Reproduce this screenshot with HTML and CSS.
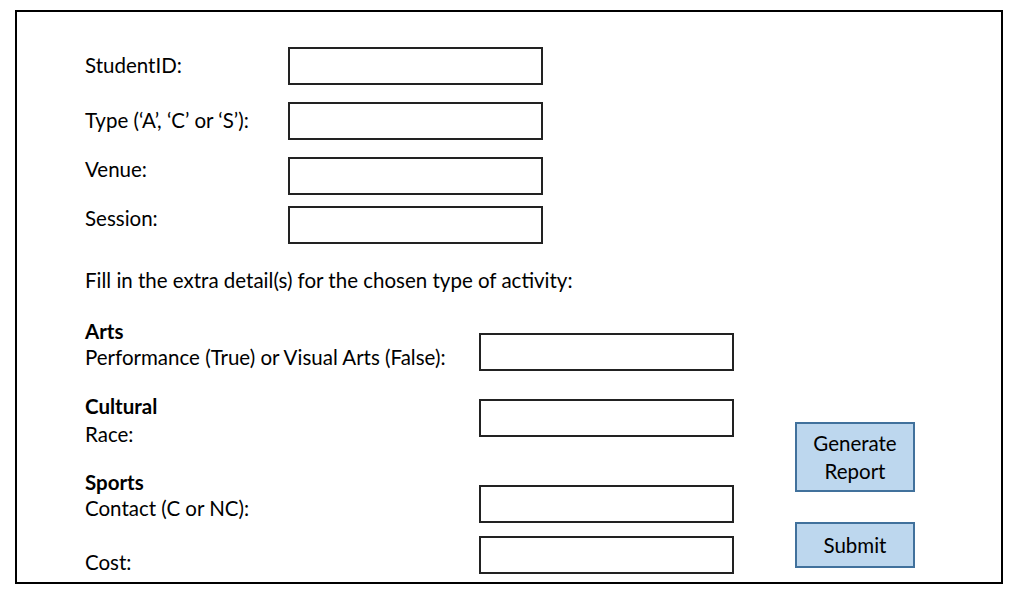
FILE: index.html
```html
<!DOCTYPE html>
<html lang="en">

<head>
    <meta charset="utf-8">
    <title>Activity registration</title>
    <meta name="viewport" content="width=device-width, initial-scale=1">
    <link rel="stylesheet" href="styles.css">
</head>

<body>

    <section class="frame">
        <form action="#" class="activity-form">
            <p class="field">
                <label for="student-id">StudentID:</label>
                <input type="text" name="student-id" id="student-id">
            </p>
            <p class="field">
                <label for="type">Type (&lsquo;A&rsquo;, &lsquo;C&rsquo; or &lsquo;S&rsquo;):</label>
                <input type="text" name="type" id="type">
            </p>
            <p class="field field-tight">
                <label for="venue">Venue:</label>
                <input type="text" name="venue" id="venue">
            </p>
            <p class="field field-tight">
                <label for="session">Session:</label>
                <input type="text" name="session" id="session">
            </p>

            <p class="note">Fill in the extra detail(s) for the chosen type of activity:</p>

            <div class="details">
                <div class="detail-labels">
                    <div class="group">
                        <h2>Arts</h2>
                        <label for="arts">Performance (True) or Visual Arts (False):</label>
                    </div>
                    <div class="group group-cultural">
                        <h2>Cultural</h2>
                        <label for="race">Race:</label>
                    </div>
                    <div class="group group-sports">
                        <h2>Sports</h2>
                        <label for="contact">Contact (C or NC):</label>
                    </div>
                    <div class="group group-cost">
                        <label for="cost">Cost:</label>
                    </div>
                </div>

                <div class="detail-inputs">
                    <input type="text" name="arts" id="arts">
                    <input type="text" name="race" id="race">
                    <input type="text" name="contact" id="contact">
                    <input type="text" name="cost" id="cost">
                </div>

                <div class="actions">
                    <button type="button" class="btn-report">Generate<br>Report</button>
                    <button type="submit" class="btn-submit">Submit</button>
                </div>
            </div>
        </form>
    </section>

</body>

</html>
```

FILE: styles.css
```css
* {
    margin: 0;
    padding: 0;
    box-sizing: border-box;
}

body {
    font-size: 20.5px;
    font-family: Lato, "Open Sans", sans-serif;
    color: #000;
    background-color: #fff;
}

/** Outer frame **/
.frame {
    width: 988px;
    height: 574px;
    margin: 10px 0 0 15px;
    border: 2px solid #000;
    padding: 35px 0 0 68px;
}

input {
    display: block;
    width: 255px;
    height: 38px;
    border: 2px solid #222;
    background-color: #fff;
    font: inherit;
}

/** Top fields **/
.field {
    display: flex;
    align-items: flex-start;
    margin-bottom: 17px;
}

.field label {
    width: 203px;
    line-height: 24px;
    padding-top: 6px;
}

.field-tight {
    margin-bottom: 11px;
}

.field-tight label {
    padding-top: 0;
}

/* margin collapses with the last field's bottom margin */
.note {
    margin-top: 24px;
    line-height: 24px;
}

/** Extra details **/
.details {
    display: flex;
    align-items: flex-start;
}

.detail-labels {
    width: 394px;
    padding-top: 26px;
}

.group h2,
.group label {
    display: block;
    font-size: inherit;
    line-height: 26px;
}

.group h2 {
    font-weight: 700;
}

.group-cultural {
    margin-top: 22px;
}

.group-cultural h2 {
    line-height: 29px;
}

.group-sports {
    margin-top: 22px;
}

.group-cost {
    margin-top: 28px;
}

.detail-inputs {
    width: 255px;
    padding-top: 41px;
}

.detail-inputs input:nth-child(2) {
    margin-top: 28px;
}

.detail-inputs input:nth-child(3) {
    margin-top: 48px;
}

.detail-inputs input:nth-child(4) {
    margin-top: 13px;
}

/** Buttons **/
.actions {
    display: flex;
    flex-direction: column;
    gap: 30px;
    width: 120px;
    margin-left: 61px;
    padding-top: 130px;
}

button {
    display: flex;
    align-items: center;
    justify-content: center;
    font: inherit;
    line-height: 28px;
    color: #000;
    background-color: #bdd7ee;
    border: 2px solid #41719c;
    border-radius: 0;
}

.btn-report {
    height: 70px;
}

.btn-submit {
    height: 46px;
}
```
